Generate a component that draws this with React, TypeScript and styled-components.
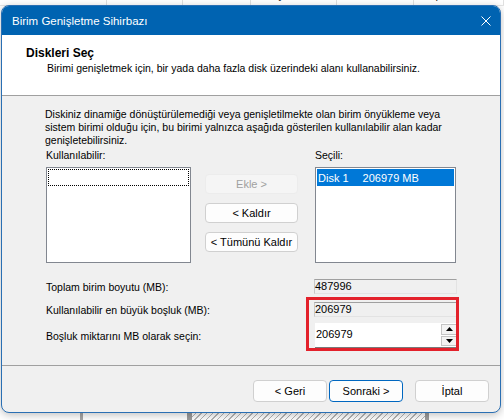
import React from 'react';
import styled, { createGlobalStyle } from 'styled-components';

const GlobalStyle = createGlobalStyle`
  html, body {
    margin: 0;
    padding: 0;
  }
  body {
    font-family: 'Liberation Sans', Arial, sans-serif;
    font-size: 10.5px;
    color: #000;
    background: #fff;
  }
  * {
    box-sizing: border-box;
  }
`;

const Screen = styled.div`
  position: relative;
  width: 504px;
  height: 420px;
  overflow: hidden;
  background: #fff;
  display: flex;
  flex-direction: column;
`;

/* ---- window behind the dialog ---- */

const HeaderRow = styled.div`
  display: flex;
  height: 18px;
  margin-top: -12px;
  border-bottom: 1px solid #e5e5e5;
  font-size: 11px;
`;

const HeaderCell = styled.div<{ w: number }>`
  width: ${p => p.w}px;
  flex: none;
  padding-left: 8px;
  line-height: 15px;
  border-right: 1px solid #e0e0e0;
  color: #1a1a1a;
  white-space: nowrap;
  overflow: hidden;
`;

const Filler = styled.div`
  flex: 1;
`;

const DiskStrip = styled.div`
  display: flex;
  height: 8px;
`;

const DiskSegment = styled.div<{ w: number; kind?: 'line' | 'bar' | 'hatch' }>`
  width: ${p => p.w}px;
  flex: none;
  background: ${p =>
    p.kind === 'line'
      ? '#a6a6a6'
      : p.kind === 'bar'
      ? '#9b9b9b'
      : p.kind === 'hatch'
      ? 'repeating-linear-gradient(135deg, #fff 0 3px, #b5b5b5 3px 4px)'
      : '#fff'};
`;

/* ---- dialog ---- */

const Dialog = styled.div`
  position: absolute;
  left: 1px;
  top: 5px;
  width: 500px;
  height: 408px;
  border: 1px solid #2a6fb3;
  border-radius: 8px;
  overflow: hidden;
  display: flex;
  flex-direction: column;
  background: #f0f0f0;
  box-shadow: 0 2px 8px rgba(0, 0, 0, 0.25);
`;

const TitleBar = styled.div`
  height: 29px;
  flex: none;
  background: #0063b1;
  color: #fff;
  display: flex;
  align-items: center;
  padding: 0 9px 0 10px;
  font-size: 11.5px;
`;

const TitleText = styled.div`
  flex: 1;
  padding-top: 1px;
`;

const CloseIcon = styled.svg`
  width: 10px;
  height: 10px;
`;

const WizardHeader = styled.div`
  height: 61px;
  flex: none;
  background: #fff;
  border-bottom: 1px solid #a0a0a0;
  padding: 11px 0 0 24px;
`;

const HeaderTitle = styled.div`
  font-weight: bold;
  font-size: 12px;
  line-height: 15px;
`;

const HeaderSub = styled.div`
  padding-left: 21px;
  line-height: 15px;
`;

const Body = styled.div`
  position: relative;
  flex: 1;
  padding: 12px 0 0 44px;
`;

const Intro = styled.p`
  margin: 0 0 0 -1px;
  line-height: 13px;
`;

const Chooser = styled.div`
  display: grid;
  grid-template-columns: 145px 93px 144px;
  grid-template-rows: 19px 96px;
  column-gap: 14px;
  margin-top: 1px;
  & > :nth-child(3n) {
    margin-left: 3px;
  }
`;

const FieldLabel = styled.div`
  line-height: 13px;
  padding-top: 1px;
`;

const ListBox = styled.div`
  background: #fff;
  border: 1px solid #828790;
  padding: 1px;
`;

const ListRow = styled.div<{ selected?: boolean; focused?: boolean }>`
  height: 17px;
  display: flex;
  align-items: center;
  gap: 14px;
  padding-left: 1px;
  white-space: nowrap;
  font-size: 11px;
  color: ${p => (p.selected ? '#fff' : '#000')};
  background: ${p => (p.selected ? '#0078d7' : 'transparent')};
  border: ${p => (p.focused ? '1px dotted #000' : 'none')};
`;

const ButtonColumn = styled.div`
  display: flex;
  flex-direction: column;
  gap: 9px;
  padding-top: 7px;
`;

const Button = styled.button<{ primary?: boolean }>`
  height: 20px;
  padding: 0;
  font: inherit;
  font-size: 11px;
  color: ${p => (p.disabled ? '#a0a0a0' : '#000')};
  background: ${p => (p.disabled ? '#f5f5f5' : '#fdfdfd')};
  border: 1px solid ${p => (p.primary ? '#0067c0' : p.disabled ? '#ececec' : '#d0d0d0')};
  border-radius: 4px;
`;

const SizeGrid = styled.div`
  display: grid;
  grid-template-columns: 268px 143px;
  grid-template-rows: 15px 15px 23px;
  row-gap: 8px;
  margin-top: 16px;
  & > :nth-child(5),
  & > :nth-child(6) {
    margin-top: -2px;
  }
`;

const SizeLabel = styled.div`
  align-self: center;
  line-height: 14px;
`;

const ReadOnlyField = styled.div`
  border-top: 1px solid #a0a0a0;
  border-left: 1px solid #c8c8c8;
  border-right: 1px solid #e3e3e3;
  border-bottom: 1px solid #e3e3e3;
  line-height: 13px;
  font-size: 11px;
`;

const SpinBox = styled.div`
  display: flex;
  background: #fff;
  border-bottom: 1px solid #7a7a7a;
  margin-left: 1px;
`;

const SpinValue = styled.div`
  flex: 1;
  line-height: 22px;
  padding-left: 1px;
  font-size: 11px;
`;

const SpinButtons = styled.div`
  width: 16px;
  display: flex;
  flex-direction: column;
  gap: 1px;
  padding: 1px 0;
`;

const SpinButton = styled.div`
  flex: 1;
  background: #f3f3f3;
  border: 1px solid #c4c4c4;
  display: flex;
  align-items: center;
  justify-content: center;
`;

const Highlight = styled.div`
  position: absolute;
  left: 304px;
  top: 201px;
  width: 153px;
  height: 54px;
  border: 3px solid #e3212b;
  pointer-events: none;
`;

const Footer = styled.div`
  height: 47px;
  flex: none;
  border-top: 1px solid #a0a0a0;
  display: flex;
  justify-content: flex-end;
  align-items: flex-start;
  padding: 14px 11px 0 0;
`;

const FooterButton = styled(Button)<{ spaced?: boolean }>`
  width: 74px;
  height: 22px;
  margin-left: ${p => (p.spaced ? '12px' : '2px')};
`;

const Triangle = ({ up }: { up?: boolean }) => (
  <svg width="7" height="4" viewBox="0 0 7 4">
    <polygon points={up ? '0,4 7,4 3.5,0' : '0,0 7,0 3.5,4'} fill="#000" />
  </svg>
);

const columns: [string, number][] = [
  ['Birim', 107],
  ['Düzen', 76],
  ['Tür', 68],
  ['Dosya Sistemi', 86],
  ['Durum', 77],
  ['Kapasite', 90],
];

export default function App() {
  return (
    <Screen>
      <GlobalStyle />
      <HeaderRow>
        {columns.map(([name, w]) => (
          <HeaderCell key={name} w={w}>
            {name}
          </HeaderCell>
        ))}
      </HeaderRow>
      <Filler />
      <DiskStrip>
        <DiskSegment w={80} />
        <DiskSegment w={3} kind="line" />
        <DiskSegment w={104} />
        <DiskSegment w={5} kind="bar" />
        <DiskSegment w={233} kind="hatch" />
        <DiskSegment w={4} kind="bar" />
        <DiskSegment w={75} />
      </DiskStrip>

      <Dialog>
        <TitleBar>
          <TitleText>Birim Genişletme Sihirbazı</TitleText>
          <CloseIcon viewBox="0 0 10 10">
            <path d="M0.5 0.5 L9.5 9.5 M9.5 0.5 L0.5 9.5" stroke="#fff" strokeWidth="1" />
          </CloseIcon>
        </TitleBar>

        <WizardHeader>
          <HeaderTitle>Diskleri Seç</HeaderTitle>
          <HeaderSub>
            Birimi genişletmek için, bir yada daha fazla disk üzerindeki alanı kullanabilirsiniz.
          </HeaderSub>
        </WizardHeader>

        <Body>
          <Intro>
            Diskiniz dinamiğe dönüştürülemediği veya genişletilmekte olan birim önyükleme veya
            <br />
            sistem birimi olduğu için, bu birimi yalnızca aşağıda gösterilen kullanılabilir alan kadar
            <br />
            genişletebilirsiniz.
          </Intro>

          <Chooser>
            <FieldLabel>Kullanılabilir:</FieldLabel>
            <div />
            <FieldLabel>Seçili:</FieldLabel>
            <ListBox>
              <ListRow focused />
            </ListBox>
            <ButtonColumn>
              <Button disabled>Ekle &gt;</Button>
              <Button>&lt; Kaldır</Button>
              <Button>&lt; Tümünü Kaldır</Button>
            </ButtonColumn>
            <ListBox>
              <ListRow selected>
                <span>Disk 1</span>
                <span>206979 MB</span>
              </ListRow>
            </ListBox>
          </Chooser>

          <SizeGrid>
            <SizeLabel>Toplam birim boyutu (MB):</SizeLabel>
            <ReadOnlyField>487996</ReadOnlyField>
            <SizeLabel>Kullanılabilir en büyük boşluk (MB):</SizeLabel>
            <ReadOnlyField>206979</ReadOnlyField>
            <SizeLabel>Boşluk miktarını MB olarak seçin:</SizeLabel>
            <SpinBox>
              <SpinValue>206979</SpinValue>
              <SpinButtons>
                <SpinButton>
                  <Triangle up />
                </SpinButton>
                <SpinButton>
                  <Triangle />
                </SpinButton>
              </SpinButtons>
            </SpinBox>
          </SizeGrid>

          <Highlight />
        </Body>

        <Footer>
          <FooterButton>&lt; Geri</FooterButton>
          <FooterButton primary>Sonraki &gt;</FooterButton>
          <FooterButton spaced>İptal</FooterButton>
        </Footer>
      </Dialog>
    </Screen>
  );
}
